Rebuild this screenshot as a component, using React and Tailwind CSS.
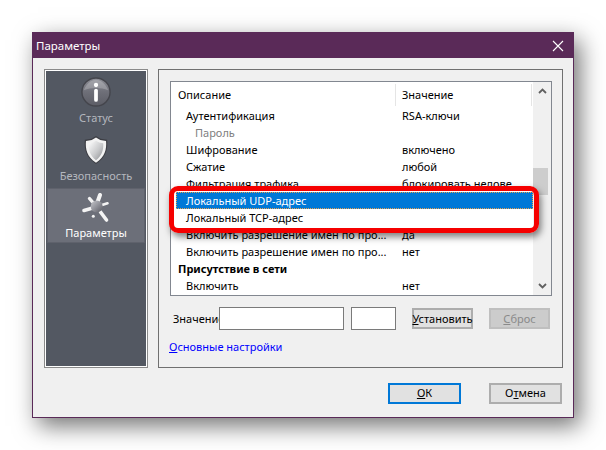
import React from "react";

const ROWS = [
  { name: "Аутентификация", value: "RSA-ключи" },
  { name: "Пароль", value: "", muted: true },
  { name: "Шифрование", value: "включено" },
  { name: "Сжатие", value: "любой" },
  { name: "Фильтрация трафика", value: "блокировать недове" },
  { name: "Локальный UDP-адрес", value: "", selected: true },
  { name: "Локальный TCP-адрес", value: "" },
  { name: "Включить разрешение имен по про...", value: "да" },
  { name: "Включить разрешение имен по про...", value: "нет" },
  { name: "Присутствие в сети", value: "", group: true },
  { name: "Включить", value: "нет" },
];

function InfoIcon() {
  return (
    <svg width="30" height="30" viewBox="0 0 32 32">
      <defs>
        <linearGradient id="infoBody" x1="0" y1="0" x2="0" y2="1">
          <stop offset="0" stopColor="#8f9098" />
          <stop offset="0.5" stopColor="#6e6f78" />
          <stop offset="1" stopColor="#5c5d66" />
        </linearGradient>
      </defs>
      <circle cx="16" cy="16" r="15" fill="url(#infoBody)" stroke="#44454c" strokeWidth="1.5" />
      <path d="M3 14C6 7 11 3 16 3s10 4 13 11c-8-3-18-3-26 0z" fill="#ffffff" opacity="0.22" />
      <circle cx="16" cy="8.5" r="2.3" fill="#ffffff" />
      <rect x="14" y="12.5" width="4" height="14" rx="2" fill="#ffffff" />
    </svg>
  );
}

function ShieldIcon() {
  return (
    <svg width="26" height="30" viewBox="0 0 28 32">
      <defs>
        <linearGradient id="shieldBody" x1="0" y1="0" x2="1" y2="1">
          <stop offset="0" stopColor="#ffffff" />
          <stop offset="0.55" stopColor="#c9cacc" />
          <stop offset="1" stopColor="#8b8c90" />
        </linearGradient>
      </defs>
      <path d="M14 1l5 3 7 1c1 10-1 19-12 26C3 24 1 15 2 5l7-1z" fill="#3d3e44" />
      <path d="M14 2.5l4.6 2.8 6.2.9c.8 9-1 17-10.800 23.400C4.200 23.200 2.400 15.200 3.200 6.200l6.200-.9z" fill="#f2f2f2" />
      <path d="M14 6l3.500 2 4.300.7c.4 7-1.300 13.300-7.800 18.300C7.500 22 5.800 15.700 6.200 8.700l4.300-.7z" fill="url(#shieldBody)" />
    </svg>
  );
}

function SettingsIcon() {
  return (
    <svg width="30" height="30" viewBox="0 0 30 30">
      <defs>
        <linearGradient id="hub" x1="0" y1="0" x2="1" y2="1">
          <stop offset="0" stopColor="#c8c9cd" />
          <stop offset="0.6" stopColor="#85868e" />
          <stop offset="1" stopColor="#5a5b63" />
        </linearGradient>
      </defs>
      <g stroke="#f4f4f4" strokeLinecap="round">
        <path d="M16.500 9L19 2" strokeWidth="4" />
        <path d="M21 12L26.500 10.300" strokeWidth="2.600" />
        <path d="M19.500 19L25.500 27" strokeWidth="3.600" />
        <path d="M10 15.500L3 17.500" strokeWidth="3.600" />
        <path d="M11.500 9L8.500 5.500" strokeWidth="3.400" />
      </g>
      <circle cx="12.300" cy="23.300" r="1.500" fill="#f4f4f4" />
      <circle cx="15.700" cy="13.500" r="6" fill="url(#hub)" />
    </svg>
  );
}

function NavItem({ icon, label, active }) {
  return (
    <div
      className={
        active
          ? "mx-[2px] -mt-[4px] h-[55px] flex flex-col items-center pt-[4px] bg-[#6c6f79] border border-[#5f626c] text-white"
          : "h-[58px] flex flex-col items-center text-[#b4b7be]"
      }
    >
      <div className={(active ? "h-[30px]" : "h-[32px]") + " flex items-center justify-center"}>{icon}</div>
      <span className="mt-[3px] leading-[14px]">{label}</span>
    </div>
  );
}

function Btn({ children, className }) {
  return (
    <div className={"flex items-center justify-center border-2 " + className}>{children}</div>
  );
}

export default function App() {
  return (
    <div
      className="w-[606px] h-[450px] bg-white pt-[32px] pl-[32px] overflow-hidden text-[11px] text-black"
      style={{ fontFamily: '"Noto Sans", "Open Sans", sans-serif' }}
    >
      <div className="w-[542px] h-[386px] bg-[#f0f0f0] border border-[#5a2a58] shadow-[6px_8px_22px_rgba(0,0,0,0.55)] flex flex-col">
        <div className="h-[25px] shrink-0 bg-[#5a2a58] flex items-center justify-between pl-[3px] pr-[9px] text-white text-[11.500px]">
          <span>Параметры</span>
          <svg width="12" height="12" viewBox="0 0 12 12" stroke="#ffffff" strokeWidth="1.100">
            <path d="M1 1l10 10M11 1L1 11" />
          </svg>
        </div>

        <div className="flex gap-[10px] pt-[11px] pl-[11px]">
          <div className="w-[104px] h-[299px] bg-[#535862] border border-[#8a8a8a] outline outline-1 -outline-offset-2 outline-white pt-[6px] text-center">
            <NavItem icon={<InfoIcon />} label="Статус" />
            <NavItem icon={<ShieldIcon />} label="Безопасность" />
            <NavItem icon={<SettingsIcon />} label="Параметры" active />
          </div>

          <div className="w-[405px] h-[299px] border border-[#707070] pt-[11px] pl-[11px]">
            <div className="relative w-[382px] h-[215px] bg-white border border-[#828790] flex">
              <div className="w-[362px] pl-[5px]">
                <div className="h-[25px] flex items-center">
                  <span className="w-[220px] pl-[2px] border-r border-[#e5e5e5] h-[22px] leading-[22px]">Описание</span>
                  <span className="w-[136px] pl-[6px] border-r border-[#e5e5e5] h-[22px] leading-[22px]">Значение</span>
                </div>
                {ROWS.map((r, i) => (
                  <div
                    key={i}
                    className={
                      "h-[17px] pt-[2px] flex items-center whitespace-nowrap " +
                      (r.selected
                        ? "bg-[#0078d7] text-white outline outline-1 -outline-offset-1 outline-dotted outline-[#e8a050]"
                        : "")
                    }
                  >
                    <span
                      className={
                        "w-[219px] " +
                        (r.group ? "pl-[2px] font-bold" : r.muted ? "pl-[19px] text-[#808080]" : "pl-[10px]")
                      }
                    >
                      {r.name}
                    </span>
                    <span className="pl-[7px]">{r.value}</span>
                  </div>
                ))}
              </div>

              <div className="w-[18px] bg-[#f0f0f0] flex flex-col items-center justify-between py-[6px] relative">
                <svg width="9" height="6" viewBox="0 0 9 6" fill="none" stroke="#606060" strokeWidth="1.800">
                  <path d="M1 5l3.500-3.500L8 5" />
                </svg>
                <div className="absolute left-0 top-[86px] w-[15px] h-[27px] bg-[#cdcdcd]" />
                <svg width="9" height="6" viewBox="0 0 9 6" fill="none" stroke="#606060" strokeWidth="1.800">
                  <path d="M1 1l3.500 3.500L8 1" />
                </svg>
              </div>

              {/* red annotation over the list */}
              <div className="absolute -left-[2px] top-[104px] w-[370px] h-[47px] border-[5px] border-[#f50000] rounded-[9px] shadow-[2px_4px_7px_rgba(0,0,0,0.5)] pointer-events-none" />
            </div>

            <div className="flex items-center mt-[11px] h-[23px] pl-[3px]">
              <span className="w-[46px] pt-[2px] whitespace-nowrap">Значение</span>
              <div className="relative w-[125px] h-[23px] bg-white border border-[#7a7a7a]" />
              <div className="ml-[7px] w-[45px] h-[23px] bg-white border border-[#7a7a7a]" />
              <Btn className="ml-[16px] w-[61px] h-[21px] pt-[2px] bg-[#e1e1e1] border-[#adadad] border">
                <span>
                  <u>У</u>становить
                </span>
              </Btn>
              <Btn className="ml-[16px] w-[61px] h-[21px] pt-[2px] bg-[#cccccc] border-[#bfbfbf] border text-[#8a8a8a]">
                <span>
                  <u>С</u>брос
                </span>
              </Btn>
            </div>
            <div className="mt-[8px] -ml-[1px] leading-[18px] text-[#0000ff]">
              <u>О</u>сновные настройки
            </div>
          </div>
        </div>

        <div className="flex justify-end gap-[28px] pr-[11px] pt-[15px]">
          <Btn className="w-[73px] h-[21px] bg-[#e1e1e1] border-[#0078d7]">
            <span>
              <u>О</u>К
            </span>
          </Btn>
          <Btn className="w-[73px] h-[21px] bg-[#e1e1e1] border-[#adadad] border">
            <span>
              О<u>т</u>мена
            </span>
          </Btn>
        </div>
      </div>
    </div>
  );
}
